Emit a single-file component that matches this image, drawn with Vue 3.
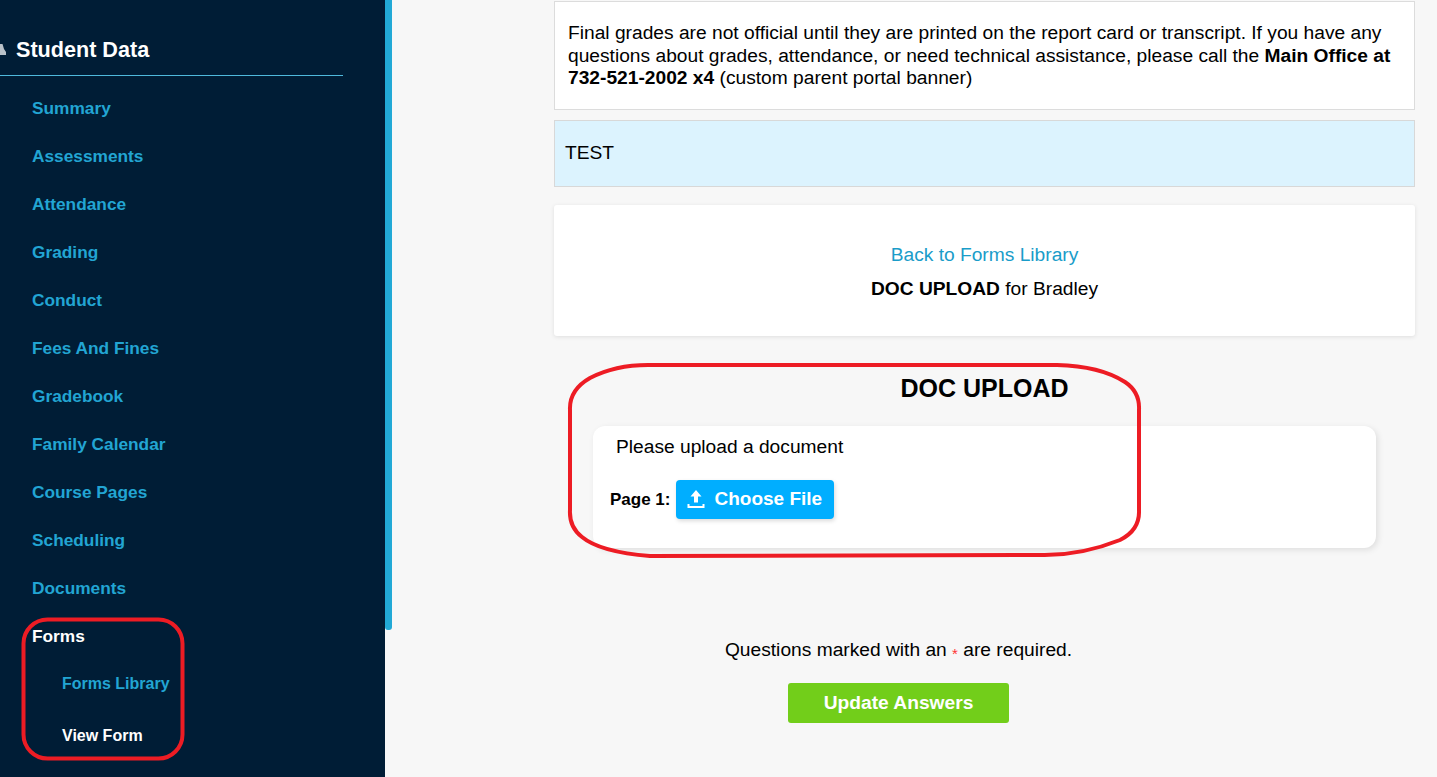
<template>
<div class="page">
  <aside class="sidebar">
    <div class="side-title">
      <svg class="cap" width="6" height="11" viewBox="0 0 6 11"><path d="M0 0h2.5l1.5 5 2 3v3H0z" fill="#b9c1c8"/></svg>
      <span>Student Data</span>
    </div>

    <nav class="nav">
      <a v-for="item in navItems" :key="item" class="nav-item">{{ item }}</a>
      <a class="nav-item current">Forms</a>
      <a class="nav-sub">Forms Library</a>
      <a class="nav-sub current">View Form</a>
    </nav>
  </aside>
  <div class="side-strip"></div>

  <main class="content">
    <div class="banner">
      Final grades are not official until they are printed on the report card or transcript. If you have any
      questions about grades, attendance, or need technical assistance, please call the
      <strong>Main Office at 732-521-2002 x4</strong> (custom parent portal banner)
    </div>

    <div class="alert">TEST</div>

    <div class="head-card">
      <a class="back-link">Back to Forms Library</a>
      <div class="form-for"><strong>DOC UPLOAD</strong> for Bradley</div>
    </div>

    <h2 class="form-title">DOC UPLOAD</h2>

    <div class="upload-card">
      <div class="question">Please upload a document</div>
      <div class="upload-row">
        <span class="page-label">Page 1:</span>
        <button class="choose-btn">
          <svg width="18" height="18" viewBox="0 0 18 18">
            <path d="M9 0 3.5 6.5H7V12.5H11V6.5H14.5z" fill="#fff"/>
            <path d="M0.5 14v4h17v-4h-2v2H2.5v-2z" fill="#fff"/>
          </svg>
          Choose File
        </button>
      </div>
    </div>

    <div class="form-foot">
      <p class="required-note">Questions marked with an <span class="star">*</span> are required.</p>
      <button class="update-btn">Update Answers</button>
    </div>
  </main>

  <!-- red marker drawn on top of the screenshot -->
  <svg class="marker" width="1437" height="777" viewBox="0 0 1437 777" fill="none" stroke="#ed1c24" stroke-width="4">
    <rect x="23.5" y="619.5" width="159" height="139" rx="24" />
    <path d="M648 365 L1057 365 Q1100 366 1125 382 Q1140 392 1139 410 L1139 510 Q1140 530 1120 540 Q1080 556 1040 555 L650 556 Q600 552 582 537 Q569 527 570 510 L570 410 Q569 390 590 378 Q615 365 648 365 Z" />
  </svg>
</div>
</template>

<script setup>
const navItems = [
  'Summary',
  'Assessments',
  'Attendance',
  'Grading',
  'Conduct',
  'Fees And Fines',
  'Gradebook',
  'Family Calendar',
  'Course Pages',
  'Scheduling',
  'Documents'
]
</script>

<style>
html, body {
  margin: 0;
  overflow: hidden;
}
</style>

<style scoped>
.page {
  position: relative;
  display: flex;
  height: 777px;
  overflow: hidden;
  background: #f7f7f7;
  font-family: "Liberation Sans", Arial, sans-serif;
  color: #000;
}

.sidebar {
  width: 385px;
  flex-shrink: 0;
  background: #001d36;
}

.side-title {
  display: flex;
  align-items: center;
  gap: 10px;
  width: 343px;
  height: 76px;
  box-sizing: border-box;
  padding-top: 24px;
  border-bottom: 1px solid #4fb9dc;
  color: #fff;
  font-size: 21.6px;
  font-weight: bold;
}

.nav {
  display: flex;
  flex-direction: column;
  padding-top: 8px;
}

.nav-item {
  height: 48px;
  line-height: 48px;
  padding-left: 32px;
  font-size: 17.3px;
  font-weight: bold;
  color: #22a5d3;
}

.nav-item.current {
  height: 46px;
  color: #fff;
}

.nav-sub {
  height: 52px;
  line-height: 52px;
  padding-left: 62px;
  font-size: 16px;
  font-weight: bold;
  color: #22a5d3;
}

.nav-sub.current {
  color: #fff;
}

.side-strip {
  width: 7px;
  height: 630px;
  flex-shrink: 0;
  background: #22a9d6;
  border-radius: 0 0 3px 3px;
}

.content {
  flex: 1;
  min-width: 0;
  padding: 1px 22px 0 162px;
  font-size: 19.2px;
}

.banner {
  box-sizing: border-box;
  height: 109px;
  padding: 20px 13px 0;
  background: #fff;
  border: 1px solid #dcdcdc;
  line-height: 22.5px;
}

.alert {
  box-sizing: border-box;
  height: 67px;
  margin-top: 10px;
  padding-left: 10px;
  line-height: 63px;
  background: #dcf3fe;
  border: 1px solid #d8d8d8;
}

.head-card {
  box-sizing: border-box;
  height: 131px;
  margin-top: 18px;
  padding-top: 38px;
  text-align: center;
  background: #fff;
  border-radius: 3px;
  box-shadow: 0 1px 4px rgba(0, 0, 0, 0.1);
}

.back-link {
  display: block;
  height: 34px;
  line-height: 24px;
  color: #1a9cc9;
}

.form-for {
  line-height: 24px;
}

.form-title {
  margin: 38px 0 0;
  height: 52px;
  line-height: 28px;
  font-size: 25px;
  text-align: center;
}

.upload-card {
  box-sizing: border-box;
  height: 122px;
  margin: 0 39px;
  padding: 10px 17px 0;
  background: #fff;
  border-radius: 12px;
  box-shadow: 2px 2px 6px rgba(0, 0, 0, 0.1);
}

.question {
  padding-left: 6px;
  line-height: 21px;
}

.upload-row {
  display: flex;
  align-items: center;
  gap: 6px;
  margin-top: 23px;
}

.page-label {
  font-size: 17px;
  font-weight: bold;
}

.choose-btn {
  display: flex;
  align-items: center;
  gap: 9px;
  width: 158px;
  height: 39px;
  padding: 0 0 2px 11px;
  border: none;
  border-radius: 4px;
  background: #00aeff;
  box-shadow: 1px 2px 4px rgba(0, 0, 0, 0.15);
  color: #fff;
  font-family: inherit;
  font-size: 19px;
  font-weight: bold;
}

.form-foot {
  margin: 91px 10px 0 -162px;
  text-align: center;
}

.required-note {
  margin: 0;
  line-height: 22px;
}

.star {
  color: #f33;
  font-size: 15px;
  vertical-align: -3px;
}

.update-btn {
  display: block;
  width: 221px;
  height: 40px;
  margin: 18px auto 0;
  border: none;
  border-radius: 3px;
  background: #72ce1a;
  color: #fff;
  font-family: inherit;
  font-size: 19.2px;
  font-weight: bold;
}

.marker {
  position: absolute;
  left: 0;
  top: 0;
  pointer-events: none;
}
</style>
